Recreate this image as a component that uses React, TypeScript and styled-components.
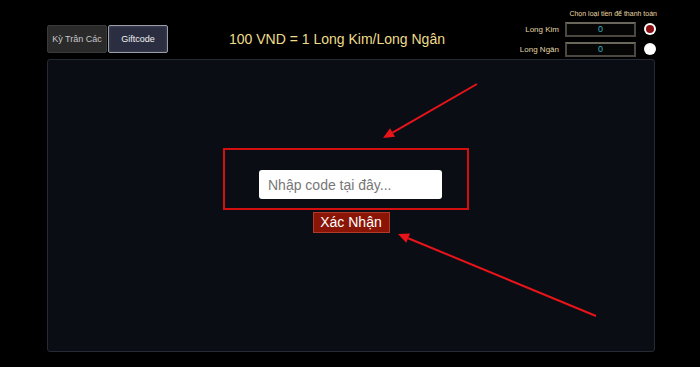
import React from "react";
import styled, { createGlobalStyle } from "styled-components";

const Global = createGlobalStyle`
  html, body { margin: 0; padding: 0; background: #000; }
  body { font-family: "Liberation Sans", Arial, sans-serif; }
  * { box-sizing: border-box; }
`;

const Page = styled.div`
  position: relative;
  width: 700px;
  height: 367px;
  background: #000;
  padding: 0 45px 0 47px;
  overflow: hidden;
`;

const Header = styled.div`
  display: flex;
  align-items: flex-start;
  height: 59px;
`;

const Tabs = styled.div`
  display: flex;
  gap: 1px;
  margin-top: 25px;
`;

const Tab = styled.div<{ $active?: boolean }>`
  width: 60px;
  height: 28px;
  display: flex;
  align-items: center;
  justify-content: center;
  font-size: 9px;
  color: ${(p) => (p.$active ? "#f2f2f2" : "#c8c8c8")};
  background: ${(p) => (p.$active ? "#2a2e40" : "#2a2a2a")};
  border: 1px solid ${(p) => (p.$active ? "#9a9ea8" : "#3a3a3a")};
  border-radius: 2px;
  box-shadow: ${(p) => (p.$active ? "inset 0 0 3px rgba(255,255,255,0.15)" : "none")};
`;

const Title = styled.div`
  margin-left: 61px;
  margin-top: 31px;
  font-size: 14px;
  line-height: 16px;
  color: #efdc8a;
  white-space: nowrap;
`;

const Currency = styled.div`
  margin-left: auto;
  margin-top: 9px;
  display: flex;
  flex-direction: column;
  align-items: flex-end;
`;

const CurrencyHint = styled.div`
  font-size: 7px;
  line-height: 9px;
  color: #ead8a0;
  margin-right: -2px;
  margin-bottom: 1px;
`;

const CurrencyRow = styled.div`
  display: flex;
  align-items: center;
  height: 20px;
`;

const CurrencyLabel = styled.div`
  font-size: 8px;
  color: #e4d6a6;
  margin-right: 6px;
`;

const AmountBox = styled.div`
  width: 71px;
  height: 15px;
  background: #050505;
  border: 2px solid #4a4840;
  border-top-color: #6a675c;
  display: flex;
  align-items: center;
  justify-content: center;
  font-size: 9px;
  color: #38b2bd;
`;

const Radio = styled.div<{ $checked?: boolean }>`
  width: 12px;
  height: 12px;
  margin-left: 8px;
  margin-right: -1px;
  border-radius: 50%;
  background: #fff;
  display: flex;
  align-items: center;
  justify-content: center;
  &::after {
    content: "";
    width: 8px;
    height: 8px;
    border-radius: 50%;
    background: ${(p) => (p.$checked ? "#8a0e12" : "#fff")};
  }
`;

const Panel = styled.div`
  width: 608px;
  height: 293px;
  background: #0a0d14;
  border: 1px solid #262a34;
  border-radius: 3px;
  display: flex;
  flex-direction: column;
  align-items: center;
  padding-top: 88px;
`;

const CodeFrame = styled.div`
  width: 246px;
  height: 62px;
  border: 2px solid #d40f0f;
  padding: 20px 25px 0 34px;
  margin-right: 10px;
`;

const CodeInput = styled.input`
  width: 183px;
  height: 29px;
  border: none;
  border-radius: 3px;
  background: #fff;
  padding: 0 9px;
  font-family: "Liberation Sans", Arial, sans-serif;
  font-size: 14px;
  color: #333;
  outline: none;
  &::placeholder { color: #777; }
`;

const SubmitButton = styled.button`
  margin-top: 2px;
  width: 77px;
  height: 21px;
  padding: 0;
  background: #8a1405;
  border: 1px solid #b03a2a;
  color: #fff;
  font-family: "Liberation Sans", Arial, sans-serif;
  font-size: 14px;
  line-height: 19px;
  cursor: pointer;
`;

const Annotations = styled.svg`
  position: absolute;
  left: 0;
  top: 0;
  pointer-events: none;
`;

function Arrow({ x1, y1, x2, y2 }: { x1: number; y1: number; x2: number; y2: number }) {
  const ang = Math.atan2(y2 - y1, x2 - x1);
  const len = 11;
  const w = 5;
  const bx = x2 - len * Math.cos(ang);
  const by = y2 - len * Math.sin(ang);
  const px = -Math.sin(ang) * w;
  const py = Math.cos(ang) * w;
  return (
    <g>
      <line x1={x1} y1={y1} x2={bx} y2={by} stroke="#e8141a" strokeWidth={2} />
      <polygon points={`${x2},${y2} ${bx + px},${by + py} ${bx - px},${by - py}`} fill="#e8141a" />
    </g>
  );
}

export default function App() {
  return (
    <>
      <Global />
      <Page>
        <Header>
          <Tabs>
            <Tab>Kỳ Trân Các</Tab>
            <Tab $active>Giftcode</Tab>
          </Tabs>
          <Title>100 VND = 1 Long Kim/Long Ngân</Title>
          <Currency>
            <CurrencyHint>Chọn loại tiền để thanh toán</CurrencyHint>
            <CurrencyRow>
              <CurrencyLabel>Long Kim</CurrencyLabel>
              <AmountBox>0</AmountBox>
              <Radio $checked />
            </CurrencyRow>
            <CurrencyRow>
              <CurrencyLabel>Long Ngân</CurrencyLabel>
              <AmountBox>0</AmountBox>
              <Radio />
            </CurrencyRow>
          </Currency>
        </Header>
        <Panel>
          <CodeFrame>
            <CodeInput placeholder="Nhập code tại đây..." />
          </CodeFrame>
          <SubmitButton>Xác Nhận</SubmitButton>
        </Panel>
        <Annotations width={700} height={367} viewBox="0 0 700 367">
          <Arrow x1={477} y1={84} x2={383} y2={138} />
          <Arrow x1={596} y1={316} x2={398} y2={234} />
        </Annotations>
      </Page>
    </>
  );
}
